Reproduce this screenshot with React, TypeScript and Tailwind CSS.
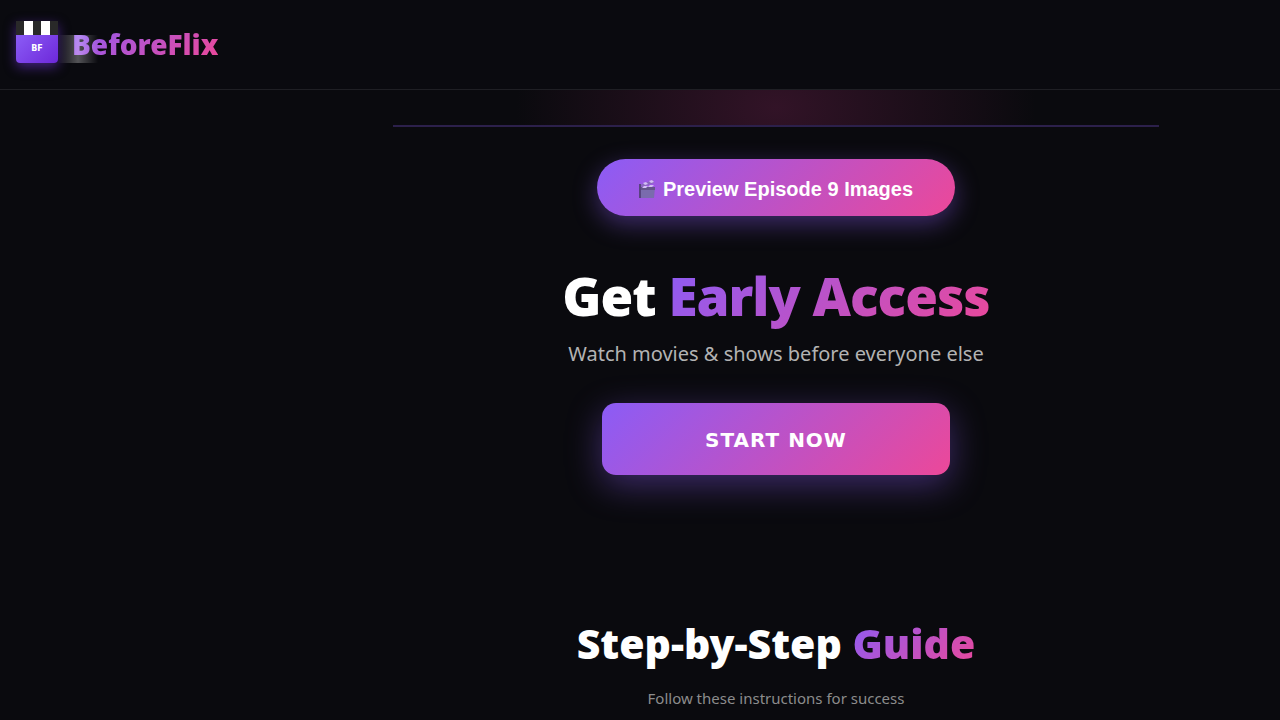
import React from 'react';

const ClapperIcon: React.FC = () => (
  <svg viewBox="0 0 18 20" className="h-5 w-[18px]" aria-hidden="true">
    <path d="M1 8h15l-1 11H1z" fill="#7a6bad" />
    <path d="M1 8h15v3H1z" fill="#65558a" />
    <path d="M1 6 14 1l1 3L3 8z" fill="#8a68bd" />
    <path d="m4 4 3-1 2 2-3 1zM10 2l3-1 2 2-3 1zM5 7h4L7 9H3zM11 6h4l-2 2H9z" fill="#d3bdf5" />
    <path d="M0 5h2v14H0z" fill="#584380" />
  </svg>
);

const Logo: React.FC = () => (
  <a href="#" className="relative flex items-center gap-[14px]">
    <span className="flex h-[42px] w-[42px] flex-col rounded-b-sm shadow-[0_4px_12px_rgba(124,58,237,0.5)]">
      <span className="h-[14px] bg-[linear-gradient(90deg,#292929_0_8px,#fff_8px_17px,#292929_17px_25px,#fff_25px_34px,#292929_34px)]" />
      <span className="flex flex-1 items-center justify-center rounded-b-sm bg-[linear-gradient(135deg,#8b5cf6,#6d28d9)] font-['DejaVu_Sans',sans-serif] text-[8px] font-black text-white">
        BF
      </span>
    </span>
    <span className="bg-[linear-gradient(135deg,#8b5cf6,#ec4899)] bg-clip-text pt-1 text-[28px] leading-9 font-black text-transparent">
      BeforeFlix
    </span>
    {/* Sheen passing over the wordmark */}
    <span className="absolute top-[14px] left-[42px] h-7 w-10 bg-linear-to-r from-transparent via-white/30 to-transparent" />
  </a>
);

const Header: React.FC = () => (
  <header className="flex h-[90px] items-center border-b border-[#1f1f24] bg-[#0a0a0f] px-4 pb-1.5">
    <Logo />
  </header>
);

export default function App() {
  return (
    <div className="min-h-screen bg-[#0a0a0e] font-['Noto_Sans','Open_Sans',sans-serif] text-white">
      <Header />
      <main className="flex flex-col items-center pl-[272px] text-center">
        <div className="h-[37px] w-[76%] border-b-2 border-[#2c204b] bg-[radial-gradient(ellipse_260px_180px_at_center,#321327,transparent)]" />

        <button
          type="button"
          className="mt-8 flex h-[57px] w-[358px] items-center justify-center gap-1.5 rounded-full bg-[linear-gradient(135deg,#8b5cf6,#ec4899)] pt-0.5 font-['Liberation_Sans',Arial,sans-serif] text-xl font-bold shadow-[0_8px_25px_rgba(139,92,246,0.4)]"
        >
          <ClapperIcon />
          Preview Episode 9 Images
        </button>

        <h1 className="mt-12 text-[53px] leading-[64px] font-black tracking-[-1px]">
          Get{' '}
          <span className="bg-[linear-gradient(135deg,#8b5cf6,#ec4899)] bg-clip-text text-transparent">
            Early Access
          </span>
        </h1>
        <p className="mt-2 text-xl leading-9 text-[#b3b3b3]">
          Watch movies &amp; shows before everyone else
        </p>
        <button
          type="button"
          className="mt-[31px] h-[72px] w-[348px] rounded-[14px] bg-[linear-gradient(135deg,#8b5cf6,#ec4899)] pt-0.5 font-['DejaVu_Sans','Arial_Black',sans-serif] text-xl font-black tracking-[1px] shadow-[0_10px_35px_rgba(139,92,246,0.4)]"
        >
          START NOW
        </button>

        <section className="mt-36 pb-16">
          <h2 className="text-[41px] leading-12 font-black">
            Step-by-Step{' '}
            <span className="bg-[linear-gradient(135deg,#8b5cf6,#ec4899)] bg-clip-text text-transparent">
              Guide
            </span>
          </h2>
          <p className="mt-[19px] text-[15px] leading-6 text-[#8c8c8c]">
            Follow these instructions for success
          </p>
        </section>
      </main>
    </div>
  );
}
